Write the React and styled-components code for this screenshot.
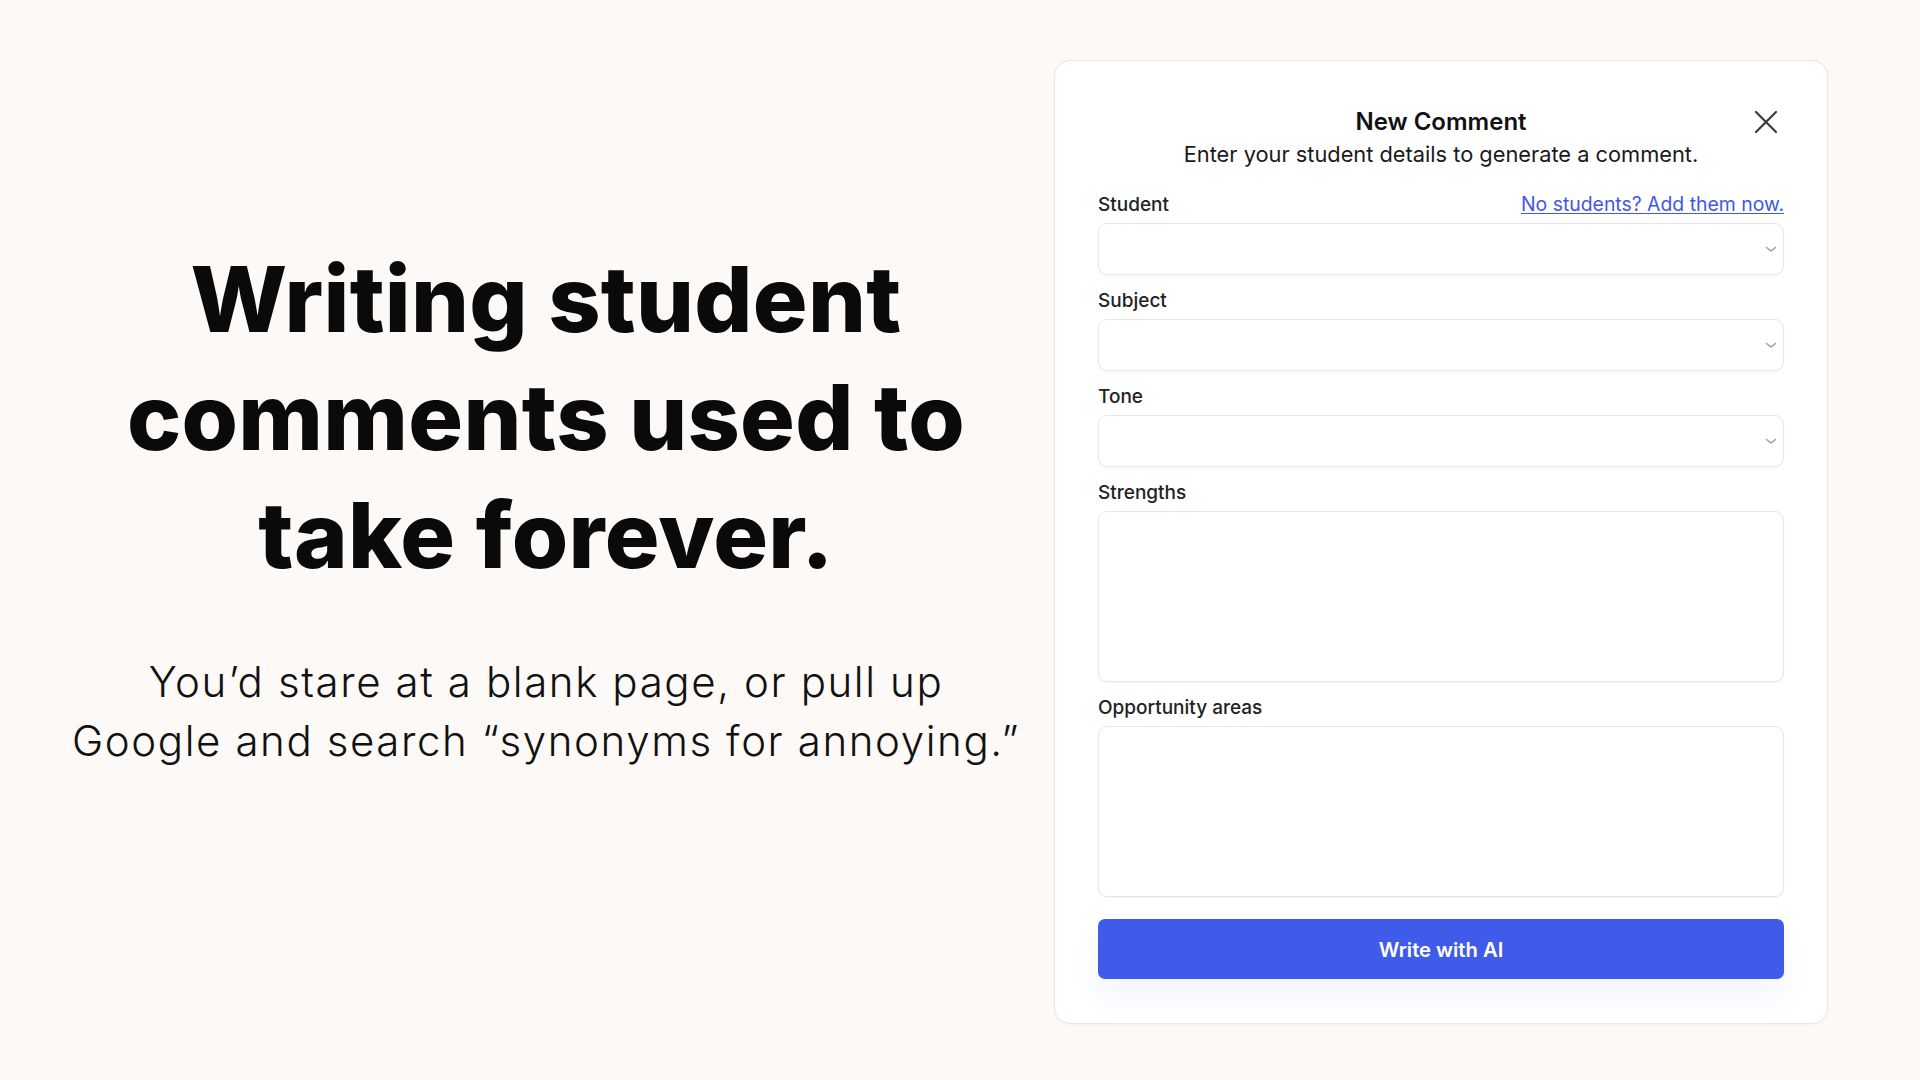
import React from "react";
import styled, { createGlobalStyle } from "styled-components";

const GlobalStyle = createGlobalStyle`
  html, body {
    margin: 0;
    padding: 0;
    background: #fdf9f6;
  }
  body {
    font-family: "Inter", "Liberation Sans", sans-serif;
    color: #111;
  }
  * { box-sizing: border-box; }
`;

const Page = styled.div`
  width: 1920px;
  height: 1080px;
  display: flex;
  align-items: flex-start;
  background: #fdf9f6;
  overflow: hidden;
`;

const Hero = styled.section`
  flex: 1;
  display: flex;
  flex-direction: column;
  align-items: center;
  padding: 240px 2px 0 40px;
  text-align: center;
  white-space: nowrap;
`;

const Headline = styled.h1`
  margin: 0;
  font-family: "Inter", "Liberation Sans", sans-serif;
  font-weight: 800;
  font-size: 91.3px;
  line-height: 118px;
  letter-spacing: 0.3px;
  color: #0a0a0a;
`;

const Lead = styled.p`
  margin: 58px 0 0;
  font-family: "Inter", "Liberation Sans", sans-serif;
  font-weight: 300;
  font-size: 42px;
  line-height: 59px;
  letter-spacing: 1.6px;
  color: #111;
`;

const Card = styled.div`
  width: 774px;
  margin: 60px 92px 0 0;
  background: #fff;
  border: 1px solid #e9e6e3;
  border-radius: 16px;
  padding: 46px 43px 44px;
  display: flex;
  flex-direction: column;
  box-shadow: 0 1px 3px rgba(0, 0, 0, 0.03);
`;

const Header = styled.header`
  position: relative;
  display: flex;
  flex-direction: column;
  align-items: center;
  margin-bottom: 23px;
`;

const Title = styled.h2`
  margin: 0;
  font-size: 24px;
  font-weight: 600;
  line-height: 30px;
  color: #111;
`;

const Subtitle = styled.p`
  margin: 2px 0 0;
  font-size: 21.8px;
  line-height: 30px;
  color: #1a1a1a;
`;

const CloseButton = styled.button`
  position: absolute;
  top: 3px;
  right: 6px;
  width: 24px;
  height: 24px;
  padding: 0;
  border: none;
  background: transparent;
  display: flex;
  align-items: center;
  justify-content: center;
  color: #3a3a3a;
  cursor: pointer;
`;

const Field = styled.div`
  display: flex;
  flex-direction: column;
  gap: 7px;
  margin-bottom: 13px;
`;

const LabelRow = styled.div`
  display: flex;
  justify-content: space-between;
  align-items: center;
  height: 24px;
`;

const Label = styled.label`
  font-size: 19px;
  font-weight: 500;
  color: #222;
`;

const Link = styled.a`
  font-size: 19.4px;
  color: #4057ee;
  text-decoration: underline;
  text-underline-offset: 2px;
`;

const SelectBox = styled.div`
  height: 52px;
  border: 1px solid #e7e7e7;
  border-radius: 9px;
  background: #fff;
  box-shadow: 0 1px 2px rgba(0, 0, 0, 0.04);
  display: flex;
  align-items: center;
  justify-content: flex-end;
  padding-right: 6px;
  color: #9a9a9a;
`;

const TextArea = styled.div`
  height: 171px;
  border: 1px solid #e7e7e7;
  border-radius: 9px;
  background: #fff;
  box-shadow: 0 1px 2px rgba(0, 0, 0, 0.04);
`;

const Submit = styled.button`
  margin-top: 9px;
  height: 60px;
  border: none;
  border-radius: 7px;
  background: #3f5be9;
  color: #fff;
  font-family: "Inter", "Liberation Sans", sans-serif;
  font-size: 20.2px;
  font-weight: 600;
  box-shadow: 0 18px 30px rgba(63, 91, 233, 0.06);
  cursor: pointer;
`;

const Chevron = () => (
  <svg width="12" height="12" viewBox="0 0 12 12" fill="none" stroke="currentColor" strokeWidth="1.4" strokeLinecap="round" strokeLinejoin="round">
    <path d="M1.5 4.5L6 8l4.5-3.5" />
  </svg>
);

const XIcon = () => (
  <svg width="24" height="24" viewBox="0 0 24 24" fill="none" stroke="currentColor" strokeWidth="2.2" strokeLinecap="round">
    <path d="M2 2l20 20M22 2L2 22" />
  </svg>
);

const SelectField = ({ label, extra }) => (
  <Field>
    <LabelRow>
      <Label>{label}</Label>
      {extra}
    </LabelRow>
    <SelectBox>
      <Chevron />
    </SelectBox>
  </Field>
);

const AreaField = ({ label }) => (
  <Field>
    <LabelRow>
      <Label>{label}</Label>
    </LabelRow>
    <TextArea />
  </Field>
);

export default function App() {
  return (
    <>
      <GlobalStyle />
      <Page>
        <Hero>
          <Headline>
            Writing student
            <br />
            comments used to
            <br />
            take forever.
          </Headline>
          <Lead>
            You’d stare at a blank page, or pull up
            <br />
            Google and search “synonyms for annoying.”
          </Lead>
        </Hero>
        <Card>
          <Header>
            <Title>New Comment</Title>
            <Subtitle>Enter your student details to generate a comment.</Subtitle>
            <CloseButton aria-label="Close">
              <XIcon />
            </CloseButton>
          </Header>
          <SelectField label="Student" extra={<Link href="#">No students? Add them now.</Link>} />
          <SelectField label="Subject" />
          <SelectField label="Tone" />
          <AreaField label="Strengths" />
          <AreaField label="Opportunity areas" />
          <Submit>Write with AI</Submit>
        </Card>
      </Page>
    </>
  );
}
